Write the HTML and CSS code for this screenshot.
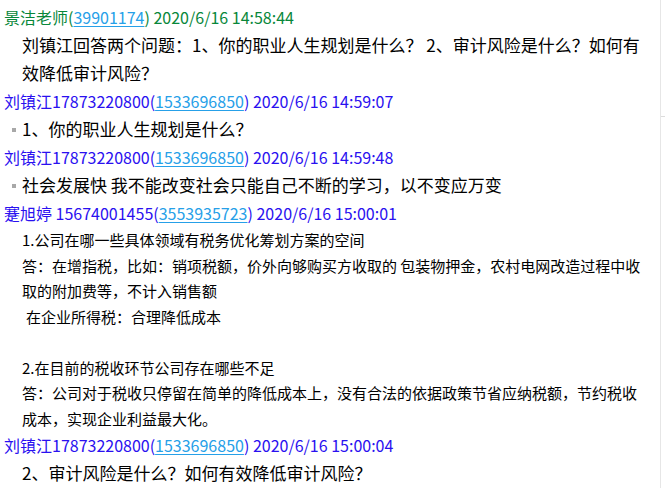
FILE: index.html
```html
<!DOCTYPE html>
<html lang="zh-CN">
<head>
<meta charset="utf-8">
<title>聊天记录</title>
<link rel="stylesheet" href="styles.css">
</head>
<body>
<div class="page">
  <div class="log">
    <div class="head teacher">景洁老师(<a class="qq">39901174</a>) 2020/6/16 14:58:44</div>
    <div class="msg big">刘镇江回答两个问题：1、你的职业人生规划是什么？ 2、审计风险是什么？如何有<br>效降低审计风险？</div>

    <div class="head student">刘镇江17873220800(<a class="qq">1533696850</a>) 2020/6/16 14:59:07</div>
    <div class="msg big bullet">1、你的职业人生规划是什么？</div>

    <div class="head student">刘镇江17873220800(<a class="qq">1533696850</a>) 2020/6/16 14:59:48</div>
    <div class="msg big bullet">社会发展快 我不能改变社会只能自己不断的学习，以不变应万变</div>

    <div class="head student">蹇旭婷 15674001455(<a class="qq">3553935723</a>) 2020/6/16 15:00:01</div>
    <div class="msg small">
      <p>1.公司在哪一些具体领域有税务优化筹划方案的空间</p>
      <p>答：在增指税，比如：销项税额，价外向够购买方收取的 包装物押金，农村电网改造过程中收<br>取的附加费等，不计入销售额</p>
      <p class="indent">在企业所得税：合理降低成本</p>
      <p class="blank">&nbsp;</p>
      <p>2.在目前的税收环节公司存在哪些不足</p>
      <p>答：公司对于税收只停留在简单的降低成本上，没有合法的依据政策节省应纳税额，节约税收<br>成本，实现企业利益最大化。</p>
    </div>

    <div class="head student">刘镇江17873220800(<a class="qq">1533696850</a>) 2020/6/16 15:00:04</div>
    <div class="msg big">2、审计风险是什么？如何有效降低审计风险？</div>
  </div>
  <div class="side"><div class="side-mark"></div></div>
</div>
</body>
</html>
```

FILE: styles.css
```css
html, body {
  margin: 0;
  padding: 0;
  background: #fff;
}
body {
  font-family: "Noto Sans CJK SC", "Noto Sans", sans-serif;
  color: #000;
  overflow: hidden;
}
.page {
  display: flex;
  width: 665px;
  height: 488px;
}
.log {
  flex: 1;
  padding: 3px 0 0 4px;
}
.side {
  width: 4px;
  border-left: 1px solid #e6e6e6;
}
.side-mark {
  margin-top: 116px;
  border-top: 1px solid #dcdcdc;
}
.head {
  font-size: 16px;
  line-height: 28px;
  white-space: nowrap;
}
.teacher { color: #08873a; }
.student { color: #2a10f0; }
.qq {
  color: #26a0e8;
  text-decoration: underline;
  text-underline-offset: 2px;
}
.msg {
  padding-left: 18px;
  white-space: nowrap;
}
.big {
  font-size: 17px;
  line-height: 28px;
}
.small {
  font-size: 15px;
  line-height: 25.5px;
}
.small p { margin: 0; }
.small .indent { padding-left: 4px; }
.bullet { position: relative; }
.bullet::before {
  content: "";
  position: absolute;
  left: 8px;
  top: 13px;
  width: 4px;
  height: 4px;
  background: #a8a8a8;
}
```
